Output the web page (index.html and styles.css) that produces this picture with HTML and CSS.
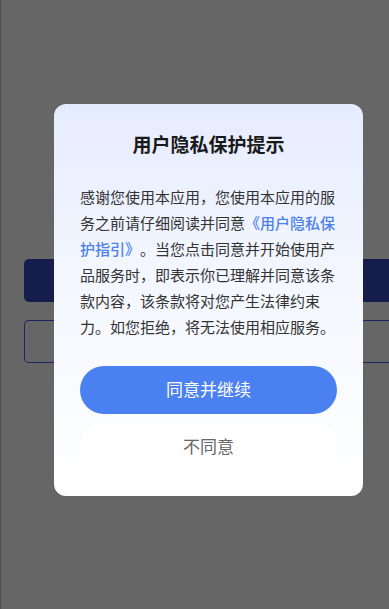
FILE: index.html
```html
<!DOCTYPE html>
<html lang="zh-CN">
  <head>
    <meta charset="UTF-8" />
    <meta name="viewport" content="width=device-width, initial-scale=1.0" />
    <title>用户隐私保护提示</title>
    <link rel="stylesheet" href="styles.css">
  </head>
  <body>
    <div class="page">
      <div class="page-btn filled"></div>
      <div class="page-btn outline"></div>
    </div>
    <div class="backdrop">
      <div class="dialog">
        <h2 class="dialog-title">用户隐私保护提示</h2>
        <p class="dialog-text">感谢您使用本应用，您使用本应用的服务之前请仔细阅读并同意<a class="link" href="#">《用户隐私保护指引》</a>。当您点击同意并开始使用产品服务时，即表示你已理解并同意该条款内容，该条款将对您产生法律约束力。如您拒绝，将无法使用相应服务。</p>
        <button class="btn agree">同意并继续</button>
        <button class="btn refuse">不同意</button>
      </div>
    </div>
  </body>
</html>
```

FILE: styles.css
```css
* {
  box-sizing: border-box;
  margin: 0;
  padding: 0;
}
html,
body {
  width: 100%;
  height: 100%;
  overflow: hidden;
}
body {
  font-family: "Noto Sans CJK SC", "Noto Sans", sans-serif;
  background: #666666;
  border-left: 1px solid #4d4d4d;
}
.page {
  display: flex;
  flex-direction: column;
  gap: 18px;
  padding: 259px 0 0 23px;
}
.page-btn {
  height: 43px;
  border-radius: 5px 0 0 5px;
}
.page-btn.filled {
  background: #141d4b;
}
.page-btn.outline {
  border: 1px solid #1c2561;
  border-right: none;
}
.backdrop {
  position: fixed;
  inset: 0;
  display: flex;
  align-items: flex-start;
  padding: 104px 0 0 54px;
}
.dialog {
  width: 309px;
  display: flex;
  flex-direction: column;
  padding: 27px 26px 25px;
  border-radius: 12px;
  background: linear-gradient(180deg, #e5ecff 0%, #f4f7ff 45%, #ffffff 100%);
}
.dialog-title {
  font-size: 19px;
  line-height: 26px;
  font-weight: 700;
  color: #1a1a1a;
  text-align: center;
  margin-bottom: 27px;
}
.dialog-text {
  font-size: 15px;
  line-height: 26px;
  color: #333333;
  margin-bottom: 26px;
  text-spacing-trim: space-all;
}
.link {
  color: #4b80f0;
  font-weight: 500;
  text-decoration: none;
}
.btn {
  font-family: inherit;
  height: 48px;
  padding-bottom: 3px;
  border: none;
  border-radius: 24px;
  font-size: 17px;
  cursor: pointer;
}
.agree {
  background: #4b80f0;
  color: #ffffff;
  margin-bottom: 9px;
}
.refuse {
  background: #ffffff;
  color: #666666;
}
```
